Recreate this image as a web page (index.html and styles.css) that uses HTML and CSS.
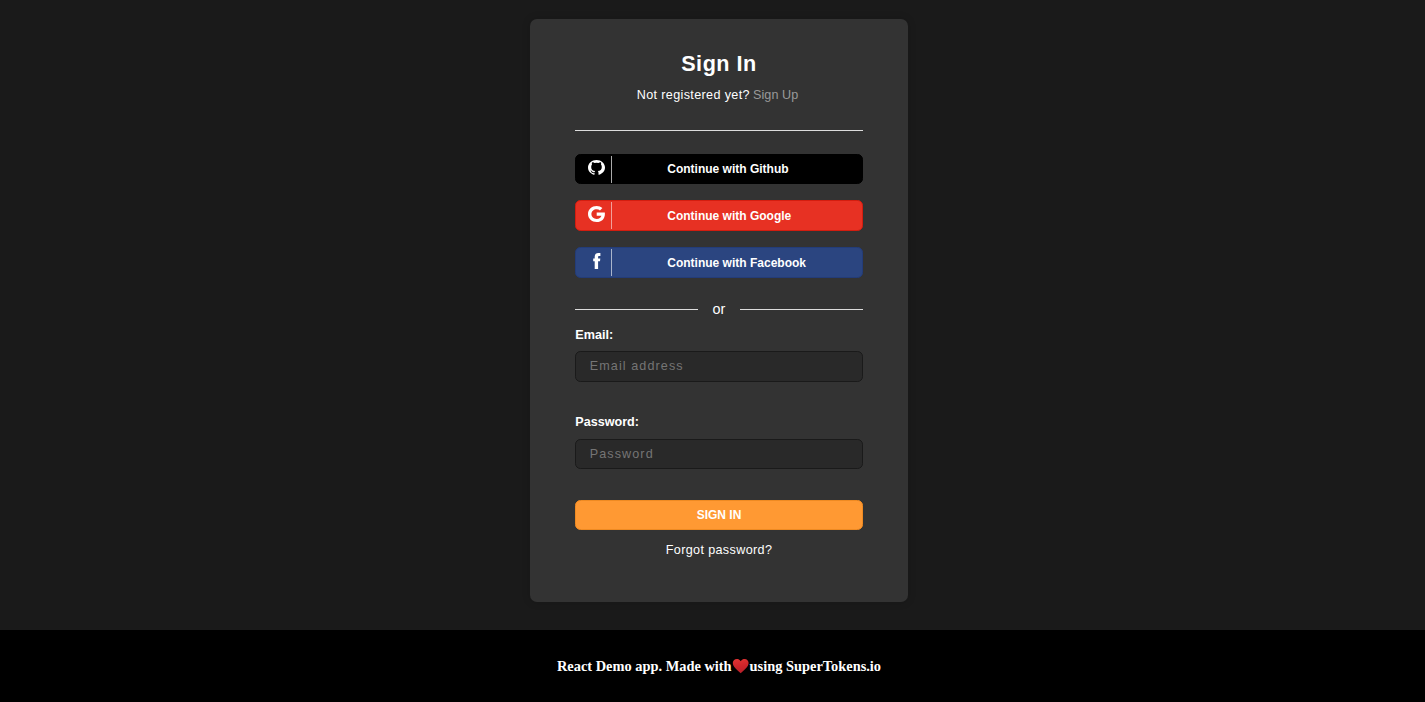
FILE: index.html
```html
<!DOCTYPE html>
<html lang="en">
<head>
<meta charset="utf-8">
<title>Sign In</title>
<link rel="stylesheet" href="styles.css">
</head>
<body>
<main class="page">
  <section class="card">
    <h1 class="title">Sign In</h1>
    <p class="subtitle">Not registered yet?<a class="signup">Sign Up</a></p>
    <div class="divider"></div>
    <div class="providers">
      <button class="provider github">
        <span class="logo"><svg width="17" height="15" viewBox="0 0 17 15"><path fill="#fff" d="M8.500 0C3.800 0 0 3.400 0 7.600c0 3.300 2.400 6.200 5.800 7.200.5.1.7-.1.7-.4v-1.300c-2.200.4-2.900-.8-3.200-1.400-.3-.5-.8-.8-.9-1.100.9-.1 1.500.6 1.900 1.100.6.700 1.400.8 2.300.5.1-.5.300-.9.600-1.100C4.700 10.700 3.200 9.400 3.200 6.900c0-.9.3-1.700.8-2.300-.1-.4-.3-1.400.1-2.400 0 0 .9-.1 2.400.8a9 9 0 0 1 4 0c1.500-.9 2.400-.8 2.400-.8.4 1 .2 2 .1 2.400.5.600.8 1.400.8 2.300 0 2.500-1.500 3.800-4 4.200.4.400.7.900.7 1.600v1.700c0 .3.200.5.700.4 3.400-1 5.800-3.900 5.800-7.200C17 3.400 13.200 0 8.500 0z"/></svg></span>
        <span class="provider-text">Continue with Github</span>
      </button>
      <button class="provider google">
        <span class="logo"><svg width="17" height="16" viewBox="0 0 17 16"><path fill="#fff" d="M8.700 6.500h8.100C17.500 12.200 14 16 8.700 16 3.800 16 0 12.500 0 8s3.800-8 8.700-8c2.300 0 4.200.8 5.700 2.100L12 4.400C11.100 3.600 10 3.200 8.700 3.200 5.700 3.200 3.400 5.300 3.400 8s2.300 4.900 5.300 4.900c2.600 0 4.200-1.300 4.700-3.200H8.700z"/></svg></span>
        <span class="provider-text">Continue with Google</span>
      </button>
      <button class="provider facebook">
        <span class="logo"><svg width="8" height="16" viewBox="0 0 8 16"><path fill="#fff" d="M7.400.1v2.800H6.200c-.9 0-1.100.4-1.100 1.100v1.500h2.200L7 8.300H5.100V16H1.700V8.300H.2V5.500h1.500V3.700C1.700 1.300 3.100 0 5.200 0z"/></svg></span>
        <span class="provider-text">Continue with Facebook</span>
      </button>
    </div>
    <div class="or"><span class="line"></span><span>or</span><span class="line"></span></div>
    <form class="form">
      <label class="label" for="email">Email:</label>
      <input class="input email" id="email" type="email" placeholder="Email address">
      <label class="label" for="password">Password:</label>
      <input class="input password" id="password" type="password" placeholder="Password">
      <button class="submit" type="button">SIGN IN</button>
    </form>
    <a class="forgot">Forgot password?</a>
  </section>
</main>
<footer class="footer">
  <span>React Demo app. Made with</span>
  <svg class="heart" width="18" height="16" viewBox="0 0 18 16"><defs><linearGradient id="heart" x1="0" y1="0" x2="0.2" y2="1"><stop offset="0" stop-color="#e23433"/><stop offset="0.6" stop-color="#cc242a"/><stop offset="1" stop-color="#b8202a"/></linearGradient></defs><path fill="url(#heart)" d="M8.700 3.200C9.700 1.600 11.200 1 12.600 1c2.400 0 4 1.700 4 4.100 0 3.600-4.300 7-7.900 10.200C5.100 12.100.800 8.700.800 5.100.800 2.700 2.400 1 4.800 1c1.500 0 2.900.6 3.900 2.200z"/></svg>
  <span>using SuperTokens.io</span>
</footer>
</body>
</html>
```
FILE: styles.css
```css
* { box-sizing: border-box; }
body { margin: 0; background: #1a1a1a; color: #fff; font-family: "Liberation Sans", Arial, sans-serif; }
.page { height: 630px; padding: 19px 0 0 13px; }
.card { display: flex; flex-direction: column; width: 378px; height: 583px; margin: 0 auto; padding: 31px 45.300px 0; border-radius: 7px; background: #333; box-shadow: 0 0 9px rgba(0, 0, 0, .16); }
.title { margin: 0; height: 27px; font-size: 21.600px; line-height: 27px; letter-spacing: .520px; text-align: center; }
.subtitle { margin: 9px 0 0; height: 18px; padding-right: 3px; font-size: 12.600px; line-height: 18px; letter-spacing: .360px; text-align: center; }
.signup { margin-left: 3px; color: #999; letter-spacing: .080px; }
.divider { height: 1px; margin-top: 26px; background: #ddd; }
.providers { display: flex; flex-direction: column; gap: 16px; margin-top: 23px; }
.provider { display: flex; align-items: center; width: 100%; height: 31px; padding: 0; border: 1px solid; border-radius: 5.400px; color: #fff; font: bold 12px "Liberation Sans", Arial, sans-serif; text-align: left; }
.github { height: 30px; background: #000; border-color: #000; }
.google { background: #e73123; border-color: #d41d0f; }
.facebook { background: #2b4580; border-color: #233c79; }
.logo { display: flex; align-items: center; justify-content: center; width: 36px; height: 27px; padding: 0 0 3px 6px; border-right: 1px solid #aaa; }
.google .logo { border-color: #f2a09a; }
.facebook .logo { border-color: #aab5cc; }
.logo svg { display: block; }
.provider-text { padding-left: 55px; }
.or { display: flex; align-items: center; justify-content: space-between; height: 18px; margin-top: 22px; font-size: 14.400px; }
.line { width: 123px; height: 1px; background: #ddd; }
.form { display: flex; flex-direction: column; margin: 0; }
.label { height: 16px; margin-top: 9px; font-size: 12.600px; font-weight: bold; line-height: 16px; }
.input { width: 100%; height: 31px; margin: 8px 0 23px; padding: 0 13.500px 2px; border: 1px solid #1a1a1a; border-radius: 5.400px; background: #292929; color: #fff; font: 12.600px "Liberation Sans", Arial, sans-serif; letter-spacing: 1.080px; }
.input::placeholder { color: #757575; }
.password { height: 30px; margin: 9px 0 31px; padding-bottom: 0; }
.submit { height: 30px; padding: 0; border: 1px solid #ef8a22; border-radius: 5.400px; background: #ff9933; color: #fff; font: bold 12px "Liberation Sans", Arial, sans-serif; }
.forgot { margin-top: 11px; font-size: 12.600px; line-height: 18px; letter-spacing: .360px; text-align: center; }
.footer { display: flex; align-items: center; justify-content: center; height: 72px; padding-left: 13px; background: #000; font: bold 14.400px "Liberation Serif", "Times New Roman", serif; }
.heart { display: block; }
```
